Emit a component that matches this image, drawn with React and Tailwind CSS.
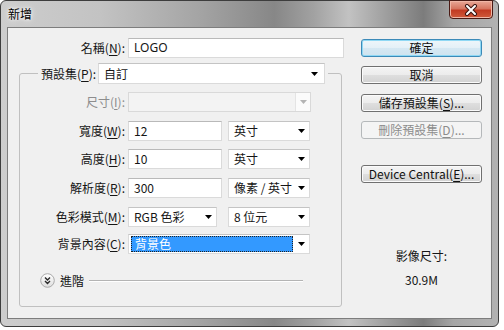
import React from "react";

const Arrow = ({ c = "#000" }) => (
  <svg width="7" height="4" viewBox="0 0 7 4">
    <path d="M0 0H7L3.5 4Z" fill={c} />
  </svg>
);

// mnemonic label, e.g. 名稱(N):
const Mn = ({ pre, k, post = "):" }) => (
  <>
    {pre}(<span className="underline underline-offset-[2px]">{k}</span>
    {post}
  </>
);

const Field = ({ className = "", children }) => (
  <div className={`flex h-[20px] items-center border border-[#dadada] border-t-[#b9b9b9] bg-white pl-[5px] ${className}`}>
    {children}
  </div>
);

const Combo = ({ className = "", children, disabled }) => (
  <div
    className={`flex h-[20px] items-center border ${
      disabled ? "border-[#d9d9d9] bg-[#f3f3f3]" : "border-[#dadada] border-t-[#c4c4c4] bg-white"
    } ${className}`}
  >
    <div className="flex-1 truncate pl-[5px]">{children}</div>
    <div
      className={`flex h-full w-[15px] items-center justify-center ${
        disabled ? "border-l border-[#e4e4e4] bg-[#fbfbfb]" : ""
      }`}
    >
      <Arrow c={disabled ? "#b4b4b4" : "#000"} />
    </div>
  </div>
);

const Btn = ({ children, primary, disabled, className = "" }) => {
  let look =
    "border-[#707070] text-[#111] bg-[linear-gradient(#f4f4f4,#ececec_50%,#dfdfdf_50%,#d2d2d2)] shadow-[inset_0_0_0_1px_#fbfbfb]";
  if (primary)
    look =
      "border-[#3c8ab8] text-[#111] bg-[linear-gradient(#eef6fa,#e4f0f7_50%,#d5e8f3_50%,#cfe3ef)] shadow-[inset_0_0_0_1px_#8fd8f4]";
  if (disabled) look = "border-[#b5b8ba] text-[#8c8c8c] bg-[#f4f4f4]";
  return (
    <div className={`flex h-[18px] w-[121px] items-center justify-center rounded-[3px] border ${look} ${className}`}>
      {children}
    </div>
  );
};

const Row = ({ label, disabled, className = "", children }) => (
  <div className={`flex items-center ${className}`}>
    <div className={`mr-[3px] w-[105px] text-right ${disabled ? "text-[#8d8d8d]" : ""}`}>{label}</div>
    {children}
  </div>
);

export default function App() {
  return (
    <div className="h-[330px] w-[504px] bg-white font-['Noto_Sans_CJK_TC','Noto_Sans',sans-serif] text-[12px] leading-[16px] text-[#151515]">
      <div className="relative flex h-[327px] w-[499px] flex-col rounded-[6px] border border-[#3d3d3d] bg-[linear-gradient(90deg,#cdcdcd,#c3c3c3_20%,#a4a4a4_40%,#878787_55%,#a2a2a2_63%,#c2c2c2_70%,#9c9c9c_78%,#7c7c7c_85%,#a6a6a6_91%,#b2b2b2)] px-[6px] pb-[7px]">
        {/* title bar */}
        <div className="flex h-[26px] items-center pl-[1px] text-[12px] text-black [text-shadow:0_0_6px_#fff,0_0_3px_#fff]">
          新增
        </div>
        <div className="absolute right-[5px] top-[-1px] flex h-[19px] w-[44px] items-center justify-center rounded-b-[4px] border border-[#4a1a14] bg-[linear-gradient(#e9a897,#d67560_45%,#c23a22_55%,#cf5a3b)] shadow-[inset_0_0_0_1px_#f0b6a6]">
          <svg width="14" height="12" viewBox="0 0 14 12">
            <path d="M3 2L11 10M11 2L3 10" stroke="#3b1410" strokeWidth="4" strokeLinecap="round" />
            <path d="M3 2L11 10M11 2L3 10" stroke="#fff" strokeWidth="2" strokeLinecap="round" />
          </svg>
        </div>

        {/* client area */}
        <div className="flex flex-1 border border-[#7d7d7d] bg-[#f0f0f0] pl-[11px]">
          {/* left column */}
          <div className="w-[325px] pt-[10px]">
            <div className="flex items-center">
              <div className="mr-[3px] w-[106px] text-right">
                <Mn pre="名稱" k="N" />
              </div>
              <Field className="w-[216px] font-['Noto_Sans','Noto_Sans_CJK_TC',sans-serif]">LOGO</Field>
            </div>

            <fieldset className="mt-[5px] w-[323px] rounded-[3px] border border-[#c0c0c0]">
              <legend className="ml-[18px] px-[3px]">
                <div className="flex h-[21px] items-center">
                  <div className="mr-[2px]">
                    <Mn pre="預設集" k="P" />
                  </div>
                  <div className="flex h-[21px] w-[227px] items-center border border-[#dadada] border-t-[#c4c4c4] bg-white">
                    <div className="flex-1 pl-[5px]">自訂</div>
                    <div className="flex w-[13px] items-center">
                      <Arrow />
                    </div>
                  </div>
                </div>
              </legend>

              <div className="pb-[18px] pt-[8px]">
                <Row label={<Mn pre="尺寸" k="I" />} disabled>
                  <Combo disabled className="w-[183px]" />
                </Row>
                <Row label={<Mn pre="寬度" k="W" />} className="mt-[9px]">
                  <Field className="w-[94px]">12</Field>
                  <Combo className="ml-[6px] w-[82px]">英寸</Combo>
                </Row>
                <Row label={<Mn pre="高度" k="H" />} className="mt-[8px]">
                  <Field className="w-[94px]">10</Field>
                  <Combo className="ml-[6px] w-[82px]">英寸</Combo>
                </Row>
                <Row label={<Mn pre="解析度" k="R" />} className="mt-[9px]">
                  <Field className="w-[94px]">300</Field>
                  <Combo className="ml-[6px] w-[82px]">像素 / 英寸</Combo>
                </Row>
                <Row label={<Mn pre="色彩模式" k="M" />} className="mt-[9px]">
                  <Combo className="w-[89px]">RGB 色彩</Combo>
                  <Combo className="ml-[11px] w-[82px]">8 位元</Combo>
                </Row>
                <Row label={<Mn pre="背景內容" k="C" />} className="mt-[7px]">
                  <div className="flex h-[20px] w-[182px] items-center border border-[#dadada] border-t-[#c4c4c4] bg-white pl-[2px]">
                    <div className="flex h-[16px] w-[162px] items-center border border-dotted border-[#222] bg-[#3399ff] pl-[3px] text-white">
                      背景色
                    </div>
                    <div className="flex flex-1 items-center justify-center">
                      <Arrow />
                    </div>
                  </div>
                </Row>

                <div className="mt-[19px] flex h-[15px] items-center pl-[20px]">
                  <svg width="15" height="15" viewBox="0 0 15 15">
                    <defs>
                      <linearGradient id="adv" x1="0" y1="0" x2="0" y2="1">
                        <stop offset="0" stopColor="#ffffff" />
                        <stop offset="1" stopColor="#dedede" />
                      </linearGradient>
                    </defs>
                    <circle cx="7.5" cy="7.5" r="6.8" fill="url(#adv)" stroke="#a9a9a9" />
                    <path d="M5 4.5L7.5 7L10 4.5M5 8L7.5 10.5L10 8" fill="none" stroke="#2a2a2a" strokeWidth="1.4" />
                  </svg>
                  <span className="ml-[5px]">進階</span>
                  <div className="ml-[5px] mr-[38px] h-[2px] flex-1 border-b border-t border-b-white border-t-[#b4b4b4]" />
                </div>
              </div>
            </fieldset>
          </div>

          {/* right column */}
          <div className="ml-[17px] flex flex-col items-center pt-[11px]">
            <Btn primary>確定</Btn>
            <Btn className="mt-[9px]">取消</Btn>
            <Btn className="mt-[10px]">
              <Mn pre="儲存預設集" k="S" post=")..." />
            </Btn>
            <Btn disabled className="mt-[9px]">
              <Mn pre="刪除預設集" k="D" post=")..." />
            </Btn>
            <Btn className="mt-[26px]">
              <Mn pre="Device Central" k="E" post=")..." />
            </Btn>
            <div className="mt-[65px]">影像尺寸:</div>
            <div className="mt-[8px]">30.9M</div>
          </div>
        </div>
      </div>
    </div>
  );
}
